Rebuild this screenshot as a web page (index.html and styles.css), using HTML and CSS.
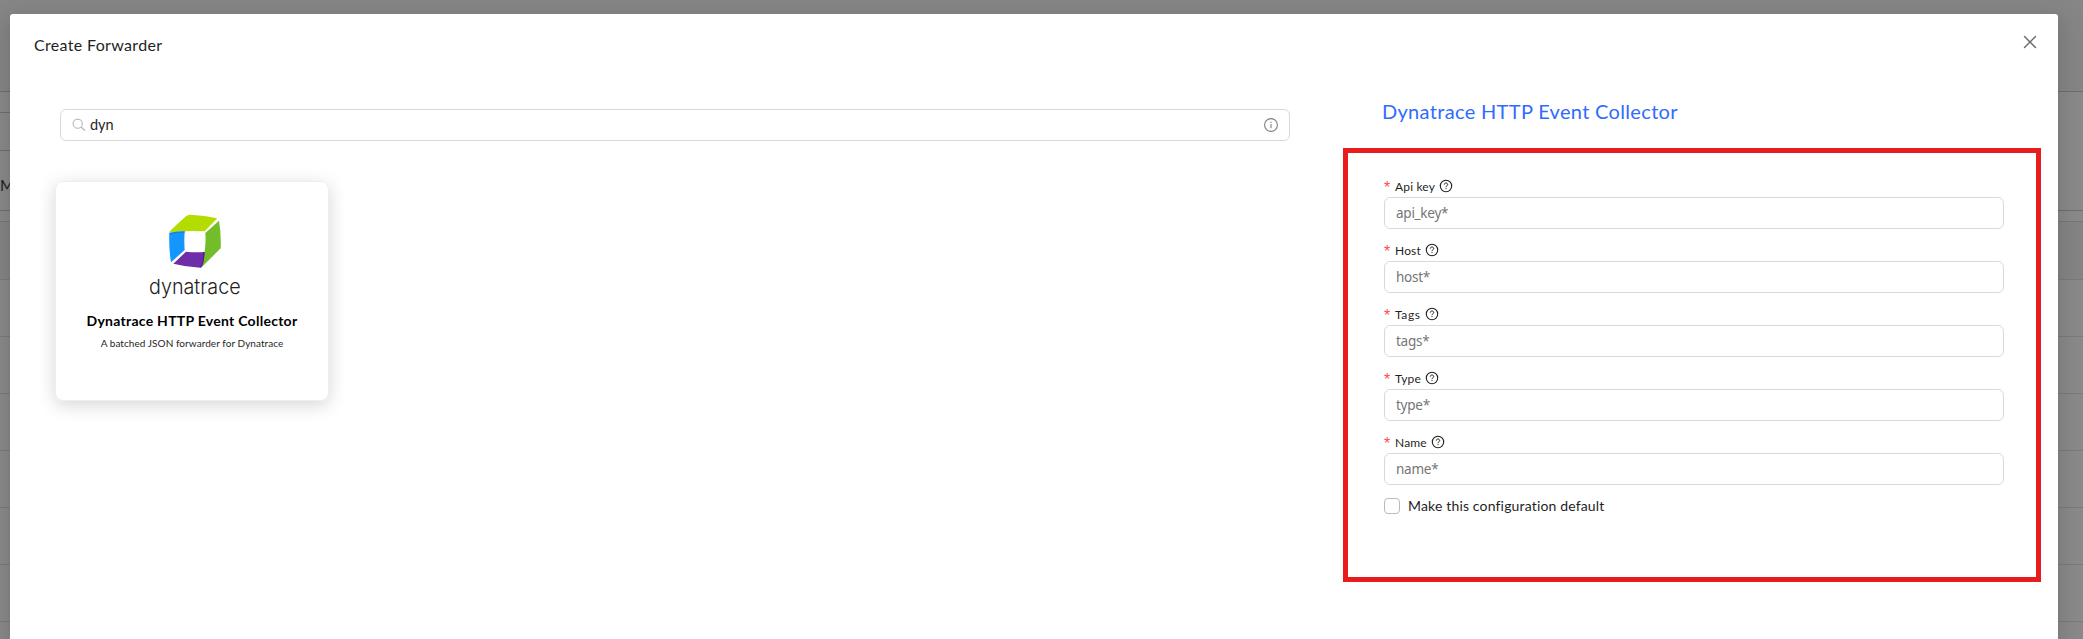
FILE: index.html
```html
<!DOCTYPE html>
<html lang="en">
<head>
<meta charset="utf-8">
<title>Create Forwarder</title>
<link rel="stylesheet" href="styles.css">
</head>
<body>
<svg class="defs" aria-hidden="true">
  <symbol id="help" viewBox="0 0 14 14"><circle cx="7" cy="7" r="5.7" fill="none" stroke="currentColor" stroke-width="1.1"/><path d="M5.3 5.6C5.3 3.5 8.7 3.5 8.7 5.6C8.7 6.8 7 6.7 7 8.1M7 9.1V10.1" fill="none" stroke="currentColor" stroke-width="1"/></symbol>
</svg>
<div class="page">
  <div class="strip strip-top"></div>
  <div class="strip strip-nav"></div>
  <div class="strip strip-tools"></div>
  <div class="strip strip-tabs"><span class="tab">M</span></div>
  <div class="strip strip-gap"></div>
  <div class="strip strip-head"></div>
  <div class="strip row"></div>
  <div class="strip row"></div>
  <div class="strip row"></div>
  <div class="strip row"></div>
  <div class="strip row"></div>
  <div class="strip row"></div>
  <div class="strip last"></div>
</div>
<div class="modal">
  <header class="modal-header">
    <h1 class="modal-title">Create Forwarder</h1>
    <svg class="close" viewBox="0 0 14 14"><path d="M1.5 1.5L12.5 12.5M12.5 1.5L1.5 12.5" stroke="#66666a" stroke-width="1.4" stroke-linecap="round"/></svg>
  </header>
  <div class="modal-body">
    <section class="catalog">
      <div class="search">
        <svg class="search-icon" viewBox="0 0 14 14"><circle cx="5.7" cy="5.7" r="4.6" fill="none" stroke="#b8b8b8" stroke-width="1.1"/><path d="M9 9L13 12.8" stroke="#b8b8b8" stroke-width="1.2"/></svg>
        <span class="query">dyn</span>
        <svg class="info" viewBox="0 0 14 14"><circle cx="7" cy="7" r="6.4" fill="none" stroke="#808080" stroke-width="1.1"/><path d="M7 6V10.3M7 3.8V5" stroke="#808080" stroke-width="1.1"/></svg>
      </div>
      <article class="card">
        <svg class="logo" viewBox="0 0 390 330">
          <path fill="#b4dc00" d="M118 95Q119 90 126 84L166 47Q173 41 182 41Q225 43 262 52L224 91Q162 87 118 95Z"/>
          <path fill="#1496ff" d="M118 96Q138 91 164 91Q162 120 164 147L123 184Q116 140 118 96Z"/>
          <path fill="#1284ea" d="M118 96Q138 91 164 91V95Q138 95 122 102Z"/>
          <path fill="#73be28" d="M267 59Q274 100 272 142L224 190Q218 198 211 200Q221 180 224 151Q228 125 226 96Z"/>
          <path fill="#6f2da8" d="M168 152Q195 155 224 153Q221 199 211 200Q168 198 130 188Z"/>
          <path fill="#591f91" d="M219 154L224 153Q221 199 211 200Q219 184 219 154Z"/>
          <text class="wordmark" x="57" y="280" textLength="275" lengthAdjust="spacingAndGlyphs">dynatrace</text>
        </svg>
        <h2 class="card-title">Dynatrace HTTP Event Collector</h2>
        <p class="card-text">A batched JSON forwarder for Dynatrace</p>
      </article>
    </section>
    <section class="config">
      <h2 class="config-title">Dynatrace HTTP Event Collector</h2>
      <form class="form">
        <div class="field"><div class="label"><span class="star">*</span><span class="name">Api key</span><svg class="help"><use href="#help"/></svg></div><div class="input">api_key*</div></div>
        <div class="field"><div class="label"><span class="star">*</span><span class="name">Host</span><svg class="help"><use href="#help"/></svg></div><div class="input">host*</div></div>
        <div class="field"><div class="label"><span class="star">*</span><span class="name name-wide">Tags</span><svg class="help"><use href="#help"/></svg></div><div class="input">tags*</div></div>
        <div class="field"><div class="label"><span class="star">*</span><span class="name">Type</span><svg class="help"><use href="#help"/></svg></div><div class="input">type*</div></div>
        <div class="field"><div class="label"><span class="star">*</span><span class="name">Name</span><svg class="help"><use href="#help"/></svg></div><div class="input">name*</div></div>
        <div class="check"><span class="box"></span><span class="check-text">Make this configuration default</span></div>
      </form>
    </section>
  </div>
</div>
</body>
</html>
```

FILE: styles.css
```css
* { box-sizing: border-box; }
body { margin: 0; height: 639px; overflow: hidden; position: relative; background: #8a8a8a; font-family: Lato, "Noto Sans", sans-serif; color: #1f1f1f; }
h1, h2, p { margin: 0; }
.defs { position: absolute; width: 0; height: 0; }

.page { display: flex; flex-direction: column; height: 639px; }
.strip { flex: none; border-bottom: 1px solid #7b7b7b; }
.strip-top { height: 92px; background: #868686; border-color: #6e6e6e; }
.strip-nav { height: 21px; border-image: linear-gradient(90deg, #6e6e6e 50%, transparent 50%) 1; }
.strip-tools { height: 38px; border-image: linear-gradient(90deg, #6e6e6e 50%, transparent 50%) 1; }
.strip-tabs { height: 60px; border-color: #6e6e6e; }
.tab { display: block; padding-top: 24px; font-size: 15px; line-height: 20px; color: #222; }
.strip-gap { height: 11px; border-color: #777; }
.strip-head { height: 58px; background: #858585; }
.row { height: 57px; }
.last { height: 17px; border: 0; }

.modal { position: absolute; left: 10px; top: 14px; width: 2048px; height: 625px; background: #fff; border-radius: 3px 3px 0 0; box-shadow: 0 6px 16px rgba(0,0,0,.08), 0 3px 6px -4px rgba(0,0,0,.12), 0 9px 28px 8px rgba(0,0,0,.07); }
.modal-header { display: flex; justify-content: space-between; height: 95px; padding: 20px 21px 0 24px; }
.modal-title { margin-top: -1px; font-size: 16px; font-weight: 400; line-height: 24px; letter-spacing: .33px; }
.close { width: 14px; height: 14px; margin-top: 1px; }
.modal-body { display: flex; justify-content: space-between; padding: 0 17px 0 45px; }

.catalog { width: 1235px; }
.search { display: flex; align-items: center; width: 1230px; height: 32px; margin-left: 5px; padding: 0 11px; border: 1px solid #d9d9d9; border-radius: 6px; }
.search-icon { width: 14px; height: 14px; }
.query { margin-left: 4px; font-size: 14.5px; line-height: 18px; }
.info { width: 14px; height: 14px; margin-left: auto; }
.card { display: flex; flex-direction: column; align-items: center; width: 274px; height: 220px; margin-top: 40px; padding-top: 19px; border: 1px solid #eee; border-radius: 8px; box-shadow: 0 4px 18px rgba(0,0,0,.17); }
.logo { width: 130px; height: 110px; margin-left: 6px; }
.wordmark { font-family: Inter, sans-serif; font-weight: 300; font-size: 62px; fill: #222; }
.card-title { margin-top: -1px; font-size: 14px; line-height: 22px; font-weight: 700; letter-spacing: .27px; color: #000; white-space: nowrap; }
.card-text { margin-top: 1px; font-size: 10px; line-height: 20px; letter-spacing: .06px; white-space: nowrap; }

.config { width: 698px; }
.config-title { height: 39px; padding: 0 0 0 39px; margin-top: -10px; margin-bottom: 10px; font-size: 20px; font-weight: 400; line-height: 24px; letter-spacing: .33px; color: #306bff; white-space: nowrap; }
.form { width: 698px; height: 434px; border: 5px solid #e81c1c; padding: 27px 32px 0 36px; }
.field { height: 64px; }
.label { display: flex; height: 17px; font-size: 12px; line-height: 14px; letter-spacing: .16px; white-space: nowrap; }
.star { width: 11px; font: 16px/15px "Liberation Sans", sans-serif; color: #ff4d4f; }
.name-wide { letter-spacing: .6px; }
.help { width: 14px; height: 14px; margin-left: 4px; margin-top: -1px; }
.input { height: 32px; width: 620px; padding-left: 11px; border: 1px solid #d9d9d9; border-radius: 6px; font: 13.5px/31px "Noto Sans", sans-serif; color: #757575; letter-spacing: -.25px; }
.check { display: flex; align-items: center; height: 22px; margin-top: -5px; }
.box { width: 16px; height: 16px; border: 1px solid #b9b9c0; border-radius: 4px; }
.check-text { margin-left: 8px; font-size: 14px; line-height: 20px; letter-spacing: .16px; white-space: nowrap; }
```
